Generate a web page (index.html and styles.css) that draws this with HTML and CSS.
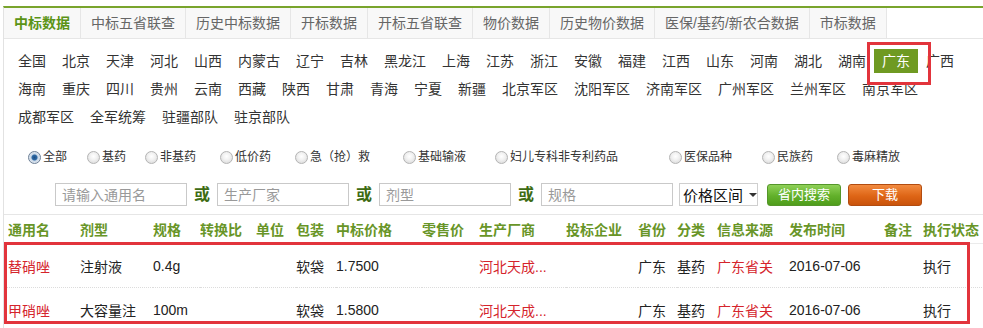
FILE: index.html
```html
<!DOCTYPE html>
<html>
<head>
<meta charset="utf-8">
<title>中标数据</title>
<link rel="stylesheet" href="styles.css">
</head>
<body>

<div class="page">
<div class="panel">
	<ul class="tabs">
		<li class="tab active">中标数据</li>
		<li class="tab">中标五省联查</li>
		<li class="tab">历史中标数据</li>
		<li class="tab">开标数据</li>
		<li class="tab">开标五省联查</li>
		<li class="tab">物价数据</li>
		<li class="tab">历史物价数据</li>
		<li class="tab">医保/基药/新农合数据</li>
		<li class="tab">市标数据</li>
	</ul><!-- end tabs -->

	<div class="regions">
		<a class="region">全国</a><a class="region">北京</a><a class="region">天津</a><a class="region">河北</a><a class="region">山西</a><a class="region">内蒙古</a><a class="region">辽宁</a><a class="region">吉林</a><a class="region">黑龙江</a><a class="region">上海</a><a class="region">江苏</a><a class="region">浙江</a><a class="region">安徽</a><a class="region">福建</a><a class="region">江西</a><a class="region">山东</a><a class="region">河南</a><a class="region">湖北</a><a class="region">湖南</a><a class="region current">广东</a><a class="region">广西</a>
		<a class="region">海南</a><a class="region">重庆</a><a class="region">四川</a><a class="region">贵州</a><a class="region">云南</a><a class="region">西藏</a><a class="region">陕西</a><a class="region">甘肃</a><a class="region">青海</a><a class="region">宁夏</a><a class="region">新疆</a><a class="region">北京军区</a><a class="region">沈阳军区</a><a class="region">济南军区</a><a class="region">广州军区</a><a class="region">兰州军区</a><a class="region">南京军区</a>
		<a class="region">成都军区</a><a class="region">全军统筹</a><a class="region">驻疆部队</a><a class="region">驻京部队</a>
	</div><!-- end regions -->

	<div class="filters">
		<label class="opt"><span class="radio checked"></span>全部</label>
		<label class="opt"><span class="radio"></span>基药</label>
		<label class="opt"><span class="radio"></span>非基药</label>
		<label class="opt"><span class="radio"></span>低价药</label>
		<label class="opt"><span class="radio"></span>急（抢）救</label>
		<label class="opt"><span class="radio"></span>基础输液</label>
		<label class="opt"><span class="radio"></span>妇儿专科非专利药品</label>
		<label class="opt"><span class="radio"></span>医保品种</label>
		<label class="opt"><span class="radio"></span>民族药</label>
		<label class="opt"><span class="radio"></span>毒麻精放</label>
	</div><!-- end filters -->

	<div class="search">
		<input type="text" class="field" placeholder="请输入通用名">
		<span class="or">或</span>
		<input type="text" class="field" placeholder="生产厂家">
		<span class="or">或</span>
		<input type="text" class="field" placeholder="剂型">
		<span class="or">或</span>
		<input type="text" class="field" placeholder="规格">
		<div class="select">价格区间<span class="caret"></span></div>
		<button class="btn btn-search">省内搜索</button>
		<button class="btn btn-down">下载</button>
	</div><!-- end search -->

	<table class="grid">
		<colgroup>
			<col class="c1"><col class="c2"><col class="c3"><col class="c4"><col class="c5"><col class="c6"><col class="c7"><col class="c8"><col class="c9"><col class="c10"><col class="c11"><col class="c12"><col class="c13"><col class="c14"><col class="c15"><col>
		</colgroup>
		<thead>
			<tr>
				<th>通用名</th><th>剂型</th><th>规格</th><th>转换比</th><th>单位</th><th>包装</th><th>中标价格</th><th>零售价</th><th>生产厂商</th><th>投标企业</th><th>省份</th><th>分类</th><th>信息来源</th><th>发布时间</th><th>备注</th><th>执行状态</th>
			</tr>
		</thead>
		<tbody>
			<tr>
				<td class="red">替硝唑</td><td>注射液</td><td>0.4g</td><td></td><td></td><td>软袋</td><td>1.7500</td><td></td><td class="red">河北天成...</td><td></td><td>广东</td><td>基药</td><td class="red">广东省关</td><td>2016-07-06</td><td></td><td>执行</td>
			</tr>
			<tr>
				<td class="red">甲硝唑</td><td>大容量注</td><td>100m</td><td></td><td></td><td>软袋</td><td>1.5800</td><td></td><td class="red">河北天成...</td><td></td><td>广东</td><td>基药</td><td class="red">广东省关</td><td>2016-07-06</td><td></td><td>执行</td>
			</tr>
		</tbody>
	</table>
</div><!-- end panel -->

<!-- red annotation boxes drawn over the screenshot -->
<div class="mark mark-region"></div>
<div class="mark mark-rows"></div>
</div><!-- end page -->

</body>
</html>
```

FILE: styles.css
```css
body {
margin: 0;
font-family: "Liberation Sans", "Noto Sans CJK SC", sans-serif;
font-size: 14px;
color: #333;
background: #fff;
}

.page {
position: relative;
width: 983px;
height: 328px;
overflow: hidden;
}

.panel {
margin: 6px 0 0 3px;
border-top: 2px solid #79a42c;
border-left: 1px solid #e2e2e2;
}

/* tabs */
.tabs {
display: flex;
margin: 0;
padding: 0;
list-style: none;
border-bottom: 1px solid #e6e6e6;
}
.tab {
padding: 0 10px;
line-height: 30px;
height: 30px;
color: #666;
background: #f8f8f8;
border-right: 1px solid #e6e6e6;
}
.tab.active {
color: #5b9416;
font-weight: bold;
}

/* provinces */
.regions {
display: flex;
flex-wrap: wrap;
padding: 8px 0 0 6px;
}
.region {
padding: 0 8px;
margin: 2px 0;
line-height: 24px;
height: 24px;
color: #333;
}
.region.current {
background: #6f9a22;
color: #fff;
}

/* radio filters */
.filters {
display: grid;
grid-template-columns: 59px 58px 75px 75px 108px 92px 174px 93px 75px 80px;
padding: 16px 0 0 24px;
font-size: 12px;
line-height: 20px;
}
.opt {
display: flex;
align-items: center;
white-space: nowrap;
}
.radio {
width: 11px;
height: 11px;
margin-right: 2px;
border: 1px solid #b4b4b4;
border-radius: 50%;
background: radial-gradient(circle at 50% 40%, #fff 0, #f2f2f2 40%, #d4d4d4 100%);
}
.radio.checked {
border-color: #6d7f96;
background: radial-gradient(circle, #1f4f85 0, #2f6aa6 2.5px, #c9d7e6 3.5px, #f4f7fa 100%);
}

/* search row */
.search {
display: flex;
align-items: center;
padding: 16px 0 0 51px;
margin-bottom: 8px;
}
.field {
box-sizing: border-box;
width: 132px;
height: 23px;
padding: 0 6px;
border: 1px solid #c9c9c9;
font-family: "Liberation Sans", "Noto Sans CJK SC", sans-serif;
font-size: 14px;
color: #333;
}
.field::placeholder {
color: #999;
}
.or {
margin: 0 7px;
font-size: 16px;
font-weight: bold;
color: #3d6b12;
line-height: 23px;
}
.select {
display: flex;
align-items: center;
box-sizing: border-box;
width: 79px;
height: 23px;
margin-left: 6px;
padding-left: 3px;
border: 1px solid #cfcfcf;
font-size: 15px;
color: #111;
}
.caret {
margin-left: 6px;
border-left: 4px solid transparent;
border-right: 4px solid transparent;
border-top: 4px solid #333;
}
.btn {
box-sizing: border-box;
width: 74px;
height: 22px;
padding: 0;
border-radius: 3px;
font-family: "Liberation Sans", "Noto Sans CJK SC", sans-serif;
font-size: 13px;
color: #fff;
line-height: 20px;
}
.btn-search {
margin-left: 9px;
background: linear-gradient(to bottom, #8fd158, #62b02a 55%, #4f9d1c);
border: 1px solid #55962a;
}
.btn-down {
margin-left: 7px;
background: linear-gradient(to bottom, #f28b40, #de6516 55%, #c9530b);
border: 1px solid #b24c10;
}

/* result table */
.grid {
width: 980px;
table-layout: fixed;
border-collapse: collapse;
border-top: 1px solid #e6e6e6;
}
.c1 { width: 76px; }
.c2 { width: 73px; }
.c3 { width: 47px; }
.c4 { width: 56px; }
.c5 { width: 40px; }
.c6 { width: 40px; }
.c7 { width: 86px; }
.c8 { width: 57px; }
.c9 { width: 87px; }
.c10 { width: 72px; }
.c11 { width: 39px; }
.c12 { width: 40px; }
.c13 { width: 72px; }
.c14 { width: 95px; }
.c15 { width: 39px; }

.grid th,
.grid td {
padding: 0;
text-align: left;
white-space: nowrap;
overflow: hidden;
}
.grid th:first-child,
.grid td:first-child {
padding-left: 4px;
}
.grid th {
height: 28px;
font-size: 14px;
color: #689527;
border-bottom: 1px solid #ebebeb;
}
.grid td {
height: 43px;
font-size: 14px;
color: #222;
border-bottom: 1px dotted #dcdcdc;
}
.grid td.red {
color: #d5242c;
}

/* annotation boxes */
.mark {
position: absolute;
box-sizing: border-box;
border: 3px solid #e2343c;
}
.mark-region {
left: 867px;
top: 42px;
width: 64px;
height: 43px;
}
.mark-rows {
left: 4px;
top: 242px;
width: 966px;
height: 82px;
}
```
